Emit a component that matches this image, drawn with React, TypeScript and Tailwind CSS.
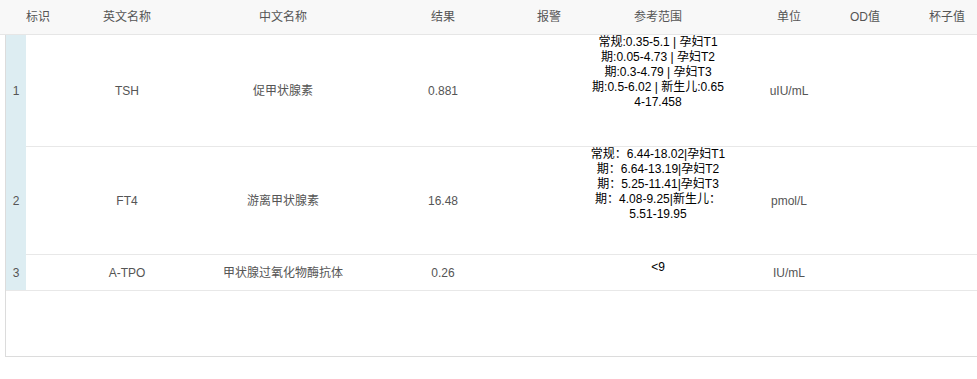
const cols = 'grid grid-cols-[20px_31px_140px_172px_148px_64px_154px_108px_44px_120px]';

interface Row {
  en: string;
  cn: string;
  result: string;
  range: string[];
  unit: string;
  h: string;
  rangePad: string;
}

const rows: Row[] = [
  {
    en: 'TSH',
    cn: '促甲状腺素',
    result: '0.881',
    range: ['常规:0.35-5.1 | 孕妇T1', '期:0.05-4.73 | 孕妇T2', '期:0.3-4.79 | 孕妇T3', '期:0.5-6.02 | 新生儿:0.65', '4-17.458'],
    unit: 'uIU/mL',
    h: 'h-[112px]',
    rangePad: 'pt-0',
  },
  {
    en: 'FT4',
    cn: '游离甲状腺素',
    result: '16.48',
    range: ['常规：6.44-18.02|孕妇T1', '期：6.64-13.19|孕妇T2', '期：5.25-11.41|孕妇T3', '期：4.08-9.25|新生儿：', '5.51-19.95'],
    unit: 'pmol/L',
    h: 'h-[108px]',
    rangePad: 'pt-0',
  },
  {
    en: 'A-TPO',
    cn: '甲状腺过氧化物酶抗体',
    result: '0.26',
    range: ['<9'],
    unit: 'IU/mL',
    h: 'h-[36px]',
    rangePad: 'pt-[5px]',
  },
];

export default function App() {
  return (
    <div className="w-[977px] h-[379px] overflow-hidden bg-white font-['Liberation_Sans','Noto_Sans_CJK_SC',sans-serif] text-[12px]">
      {/* header */}
      <div className={`${cols} w-[1100px] pl-[6px] h-[35px] bg-[#f8f8f8] border-b border-[#e6e6e6] text-[#555] items-center`}>
        <div className="col-span-2 pl-[20px] whitespace-nowrap">标识</div>
        <div className="text-center">英文名称</div>
        <div className="text-center">中文名称</div>
        <div className="text-center">结果</div>
        <div className="text-center">报警</div>
        <div className="text-center">参考范围</div>
        <div className="text-center">单位</div>
        <div className="text-center">OD值</div>
        <div className="text-center">杯子值</div>
      </div>

      {/* body */}
      <div className="ml-[5px] w-[1100px] h-[322px] border-l border-b border-[#dcdcdc]">
        {rows.map((r, i) => (
          <div key={r.en} className={`${cols} ${r.h}`}>
            <div className={`flex items-center justify-center bg-[#ddedf2] text-[#555] ${i === rows.length - 1 ? 'border-b border-[#e8e8e8]' : ''}`}>
              {i + 1}
            </div>
            <div className="col-span-9 grid grid-cols-subgrid border-b border-[#e8e8e8] text-[#555]">
              <div />
              <div className="flex items-center justify-center">{r.en}</div>
              <div className="flex items-center justify-center whitespace-nowrap">{r.cn}</div>
              <div className="flex items-center justify-center">{r.result}</div>
              <div className="flex items-center justify-center" />
              <div className={`flex flex-col items-center ${r.rangePad} leading-[15px] text-black`}>
                {r.range.map((line) => (
                  <span key={line} className="whitespace-nowrap">{line}</span>
                ))}
              </div>
              <div className="flex items-center justify-center">{r.unit}</div>
              <div />
              <div />
            </div>
          </div>
        ))}
      </div>
    </div>
  );
}
